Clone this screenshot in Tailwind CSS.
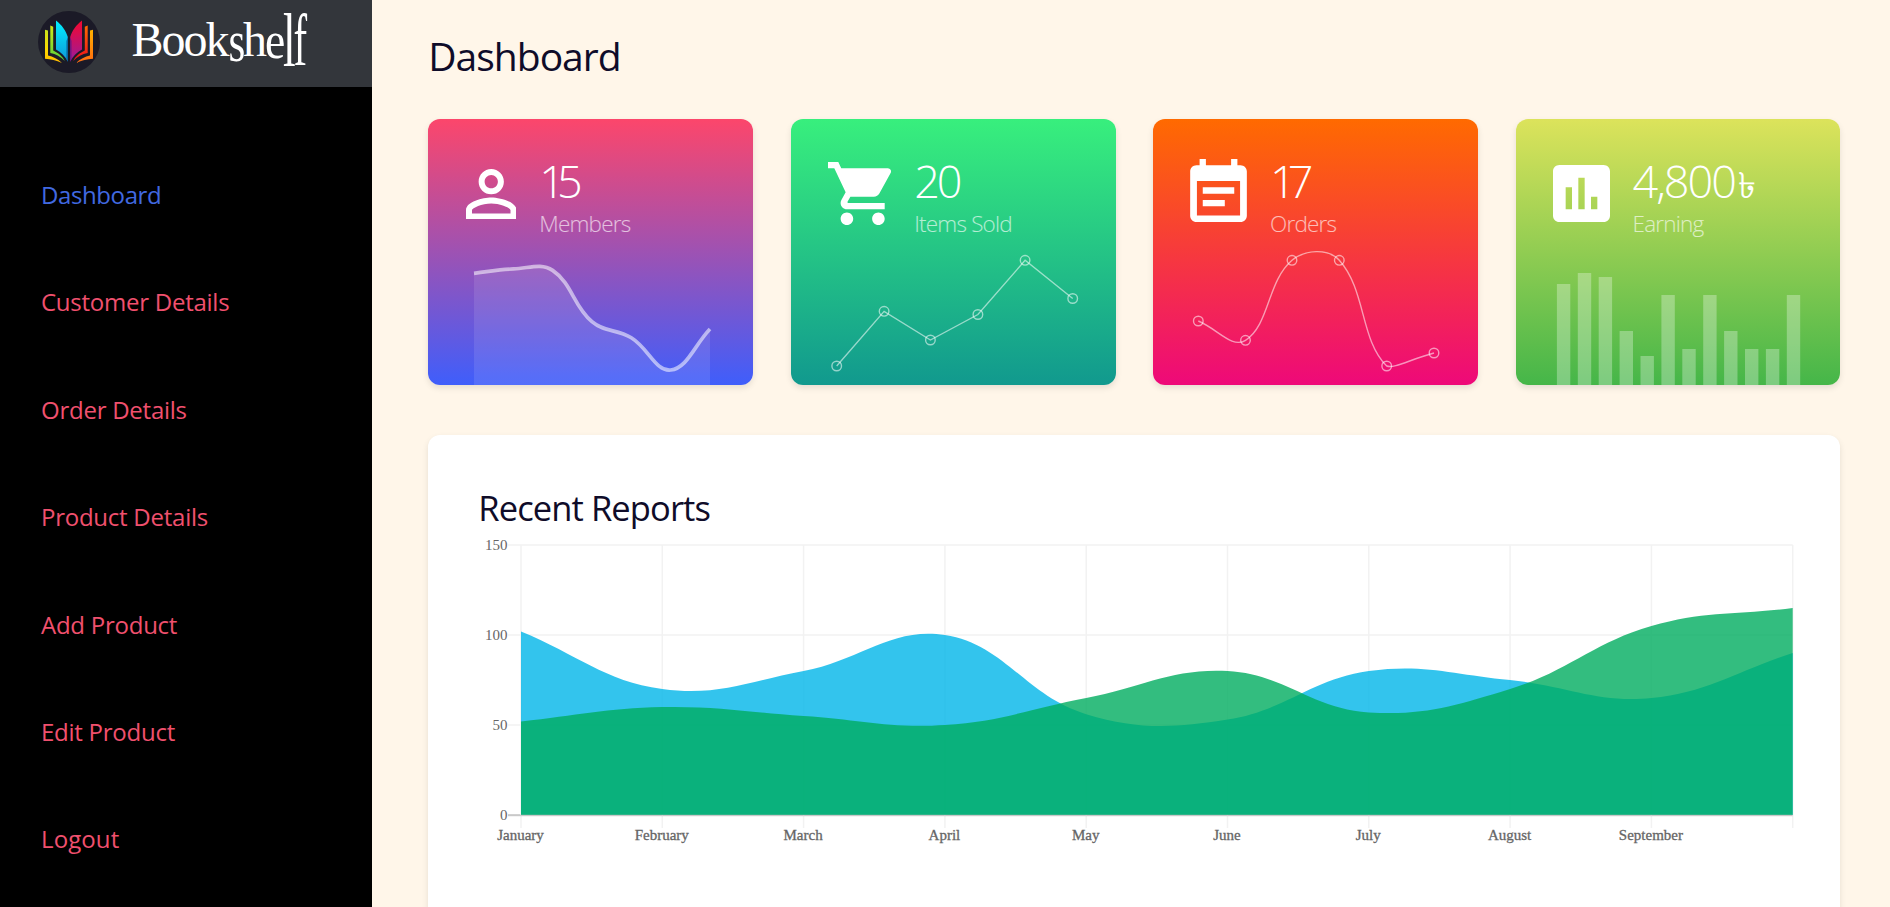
<!DOCTYPE html>
<html lang="en">
<head>
<meta charset="utf-8">
<title>Bookshelf Dashboard</title>
<script src="https://cdn.jsdelivr.net/npm/@tailwindcss/browser@4"></script>
</head>
<body class="flex h-[907px] overflow-hidden bg-[#fff6e9] font-['Open_Sans','Noto_Sans',sans-serif] text-[#0f0c29]">
<aside class="h-full w-[372px] shrink-0 bg-black">
  <div class="h-[87px] bg-[#33363b]">
    <svg class="block h-[87px] w-[372px]" viewBox="0 0 372 87">
      <defs>
        <linearGradient id="cy" x1="0" y1="0" x2="0" y2="1"><stop offset="0" stop-color="#00f0ff"/><stop offset="1" stop-color="#0f96d8"/></linearGradient>
        <linearGradient id="mg" x1="0" y1="0" x2="0" y2="1"><stop offset="0" stop-color="#f5082f"/><stop offset="1" stop-color="#9a1a9c"/></linearGradient>
        <linearGradient id="gn" x1="0" y1="0" x2="0" y2="1"><stop offset="0" stop-color="#d2e81a"/><stop offset="1" stop-color="#55d03a"/></linearGradient>
        <linearGradient id="ye" x1="0" y1="0" x2="0" y2="1"><stop offset="0" stop-color="#c9e21c"/><stop offset=".6" stop-color="#ffd800"/><stop offset="1" stop-color="#ffb800"/></linearGradient>
        <linearGradient id="rd" x1="0" y1="0" x2="0" y2="1"><stop offset="0" stop-color="#ff6a00"/><stop offset="1" stop-color="#ee0f1c"/></linearGradient>
        <linearGradient id="or" x1="0" y1="0" x2="0" y2="1"><stop offset="0" stop-color="#ffb000"/><stop offset="1" stop-color="#ff6a10"/></linearGradient>
      </defs>
      <circle cx="69" cy="42" r="31" fill="#1b1a27"/>
      <path fill="url(#cy)" d="M56 20.5C62 25 66 31 67.8 37V61.5C65 56 61 52.500 56 49.500Z"/>
      <path fill="#075f9c" d="M66.500 41L67.800 37V62L66.500 58.500Z"/>
      <path fill="url(#mg)" d="M82 20.500C76 25 72 31 70.200 37V61.500C73 56 77 52.500 82 49.500Z"/>
      <path fill="#6b1684" d="M71.500 41L70.200 37V62L71.500 58.500Z"/>
      <path fill="url(#gn)" d="M50.300 25.500L53.200 26.800V50.500C58 53 62.500 56 64.800 61C60.500 56.500 56 54 50.300 53Z"/>
      <path fill="url(#rd)" d="M87.700 25.500L84.800 26.800V50.500C80 53 75.500 56 73.200 61C77.500 56.500 82 54 87.700 53Z"/>
      <path fill="url(#ye)" d="M45 29.800L48 30.600V55.500C53 56.500 58 59 62 63C56 60.500 51 59 45 58.700Z"/>
      <path fill="url(#or)" d="M93 29.800L90 30.600V55.500C85 56.500 80 59 76 63C82 60.500 87 59 93 58.700Z"/>
      <g fill="#fff" font-family="Liberation Serif, serif" font-size="48">
        <text x="131.500 161.500 183.500 205.500" y="56">Book</text>
        <text transform="translate(228.500 60.500) scale(.9 1.220)">s</text>
        <text transform="translate(243 56)">h</text>
        <text transform="translate(265 57.500) scale(.95 1.100)">e</text>
        <text transform="translate(283 65.500) scale(.95 1.580)">l</text>
        <text transform="translate(293.500 65) scale(.85 1.540)">f</text>
      </g>
    </svg>
  </div>
  <nav class="mt-[54px] flex flex-col pl-[41px] text-[24px] leading-[107.400px] tracking-[-0.250px] text-[#f0506e]">
    <a class="tracking-[-0.400px] text-[#4169e1]">Dashboard</a>
    <a>Customer Details</a>
    <a>Order Details</a>
    <a>Product Details</a>
    <a>Add Product</a>
    <a>Edit Product</a>
    <a class="tracking-[0.100px]">Logout</a>
  </nav>
</aside>
<main class="flex w-[1518px] flex-col pr-[49.700px] pl-[56.300px]">
  <h1 class="mt-[30px] h-[89px] shrink-0 text-[39px] leading-[52px] tracking-[-1px]">Dashboard</h1>
  <section class="grid h-[266px] shrink-0 grid-cols-4 gap-[37.600px]">
    <article class="flex flex-col justify-between overflow-hidden rounded-xl bg-linear-to-b/srgb from-[#fc466b] to-[#3f5efb] shadow-[0_3px_6px_rgba(0,0,0,0.1)]">
      <div class="flex pt-[37px] pl-[37.500px]">
        <svg class="mt-[12.500px] h-[50.500px] w-[50.500px]" viewBox="4 4 16 16" fill="#fff"><path d="M12 5.900c1.160 0 2.100.94 2.100 2.100s-.94 2.100-2.100 2.100S9.900 9.160 9.900 8s.94-2.100 2.100-2.100m0 9c2.970 0 6.100 1.460 6.100 2.100v1.100H5.900V17c0-.64 3.130-2.100 6.100-2.100M12 4C9.790 4 8 5.790 8 8s1.790 4 4 4 4-1.790 4-4-1.790-4-4-4zm0 9c-2.670 0-8 1.340-8 4v3h16v-3c0-2.660-5.330-4-8-4z"/></svg>
        <div class="pl-[23px] font-light text-white">
          <div class="h-[50px] text-[45px] leading-[50px] tracking-[-8px]">15</div>
          <div class="text-[22.500px] leading-[36px] tracking-[-0.800px] text-white/65">Members</div>
        </div>
      </div>
      <svg class="block h-[140px] w-[325px]" viewBox="0 0 325 140"><path id="m-fill" fill="#fff" fill-opacity=".1"/><path id="m-line" fill="none" stroke="#fff" stroke-opacity=".55" stroke-width="3.700"/></svg>
    </article>
    <article class="flex flex-col justify-between overflow-hidden rounded-xl bg-linear-to-b/srgb from-[#38ef7d] to-[#11998e] shadow-[0_3px_6px_rgba(0,0,0,0.1)]">
      <div class="flex pt-[37px] pl-[37.500px]">
        <svg class="mt-[6px] h-[63px] w-[63px]" viewBox="1 2 20 20" fill="#fff"><path d="M7 18c-1.100 0-1.990.9-1.990 2S5.900 22 7 22s2-.9 2-2-.9-2-2-2zM1 2v2h2l3.600 7.590-1.350 2.450c-.16.28-.25.61-.25.96 0 1.100.9 2 2 2h12v-2H7.420c-.14 0-.25-.11-.25-.25l.03-.12.900-1.630h7.450c.75 0 1.410-.41 1.750-1.030l3.580-6.490A1 1 0 0 0 20.010 4H5.210l-.94-2H1zm16 16c-1.100 0-1.990.9-1.990 2s.89 2 1.990 2 2-.9 2-2-.9-2-2-2z"/></svg>
        <div class="pl-[23px] font-light text-white">
          <div class="h-[50px] text-[45px] leading-[50px] tracking-[-3px]">20</div>
          <div class="text-[22.500px] leading-[36px] tracking-[-0.800px] text-white/65">Items Sold</div>
        </div>
      </div>
      <svg id="items" class="block h-[140px] w-[325px]" viewBox="0 0 325 140" fill="none" stroke="#fff" stroke-opacity=".55" stroke-width="1.400"></svg>
    </article>
    <article class="flex flex-col justify-between overflow-hidden rounded-xl bg-linear-to-b/srgb from-[#ff6a00] to-[#ee0979] shadow-[0_3px_6px_rgba(0,0,0,0.1)]">
      <div class="flex pt-[37px] pl-[37px]">
        <svg class="mt-[3px] h-[63px] w-[57px]" viewBox="3 1 18 20" fill="#fff"><path d="M17 10H7v2h10v-2zm2-7h-1V1h-2v2H8V1H6v2H5c-1.110 0-1.990.9-1.990 2L3 19c0 1.100.89 2 2 2h14c1.100 0 2-.9 2-2V5c0-1.100-.9-2-2-2zm-.15 15.950H5.150V8h13.700v10.950zM14 14H7v2h7v-2z"/></svg>
        <div class="pl-[23px] font-light text-white">
          <div class="h-[50px] text-[45px] leading-[50px] tracking-[-8px]">17</div>
          <div class="text-[22.500px] leading-[36px] tracking-[-0.800px] text-white/65">Orders</div>
        </div>
      </div>
      <svg id="orders" class="block h-[140px] w-[325px]" viewBox="0 0 325 140" fill="none" stroke="#fff" stroke-opacity=".55" stroke-width="1.400"></svg>
    </article>
    <article class="flex flex-col justify-between overflow-hidden rounded-xl bg-linear-to-b/srgb from-[#dce35b] to-[#45b649] shadow-[0_3px_6px_rgba(0,0,0,0.1)]">
      <div class="flex pt-[37px] pl-[37px]">
        <svg class="mt-[9px] h-[57px] w-[57px]" viewBox="3 3 18 18" fill="#fff"><path d="M19 3H5c-1.100 0-2 .9-2 2v14c0 1.100.9 2 2 2h14c1.100 0 2-.9 2-2V5c0-1.100-.9-2-2-2zM9 17H7v-7h2v7zm4 0h-2V7h2v10zm4 0h-2v-4h2v4z"/></svg>
        <div class="pl-[23px] font-light text-white">
          <div class="h-[50px] text-[45px] leading-[50px] tracking-[-2px]">4,800<span class="ml-[3px] text-[36px]">৳</span></div>
          <div class="text-[22.500px] leading-[36px] tracking-[-0.800px] text-white/65">Earning</div>
        </div>
      </div>
      <svg id="earning" class="block h-[140px] w-[325px]" viewBox="0 0 325 140" fill="#fff" fill-opacity=".3"></svg>
    </article>
  </section>
  <section class="mt-[50px] h-[500px] shrink-0 rounded-xl bg-white pt-[47px] shadow-[0_3px_6px_rgba(0,0,0,0.1)]">
    <h2 class="h-[53px] pl-[50px] text-[34.500px] leading-[51px] tracking-[-0.900px]">Recent Reports</h2>
    <svg id="report" class="block h-[320px] w-[1412px]" viewBox="0 0 1412 320" font-family="Liberation Serif, serif" font-size="15"></svg>
  </section>
</main>
<script>
// Smooth bezier path through the points; control points are weighted by segment length.
function spline(p, t) {
  const cps = p.map((c, i) => {
    const a = p[i - 1] || c, b = p[i + 1] || c;
    const d0 = Math.hypot(c[0] - a[0], c[1] - a[1]), d1 = Math.hypot(b[0] - c[0], b[1] - c[1]);
    const s = d0 + d1, fa = t * d0 / s, fb = t * d1 / s, dx = b[0] - a[0], dy = b[1] - a[1];
    return [[c[0] - fa * dx, c[1] - fa * dy], [c[0] + fb * dx, c[1] + fb * dy]];
  });
  let d = 'M' + p[0];
  for (let i = 1; i < p.length; i++) d += 'C' + cps[i - 1][1] + ' ' + cps[i][0] + ' ' + p[i];
  return d;
}
const $ = id => document.getElementById(id);

const members = [78, 81, 80, 45, 34, 12, 40].map((v, i) => [46 + i * 39.33, 142.6 - v * 1.465]);
const md = spline(members, 0.4);
$('m-line').setAttribute('d', md);
$('m-fill').setAttribute('d', md + 'V140H46Z');

const dots = p => p.map(c => `<circle cx="${c[0]}" cy="${c[1]}" r="4.8"/>`).join('');
const items = [[45.7, 121], [93.1, 66.3], [139.4, 95], [186.9, 69.5], [234.1, 15.3], [281.7, 53.5]];
$('items').innerHTML = `<path d="M${items.join('L')}"/>` + dots(items);
const orders = [[45.3, 76], [92.5, 95.3], [139, 15.3], [186.3, 15.3], [233.7, 121], [281, 108]];
const od = spline(orders, 0.4);
$('orders').innerHTML = `<path d="${od.replace(/C[^C]*$/, 'C241 124 258 114 281 108')}"/>` + dots(orders);

$('earning').innerHTML = [101, 112, 108, 54, 29, 90, 36, 90, 54, 36, 36, 90]
  .map((h, i) => `<rect x="${40.9 + i * 20.9}" y="${140 - h}" width="13.4" height="${h}"/>`).join('');

const X = i => 93 + i * 141.3, Y = v => 280 - v * 1.8;
const area = (data, color) => `<path fill="${color}" d="${spline(data.map((v, i) => [X(i), Y(v)]), 0.4)}V280H93Z"/>`;
let out = '';
[0, 50, 100, 150].forEach(v => {
  out += `<path d="M80 ${Y(v)}H${X(9)}" stroke="${v ? '#f2f2f2' : '#c6c6c6'}" stroke-width="1.5"/>`;
  out += `<text x="79.5" y="${Y(v) + 4.5}" text-anchor="end" fill="#666">${v}</text>`;
});
for (let i = 0; i < 10; i++) out += `<path d="M${X(i)} 10V293" stroke="#f2f2f2" stroke-width="1.5"/>`;
out += area([102, 70, 80, 100, 56, 53, 80, 75, 65, 90], 'rgba(0,181,233,.8)');
out += area([52, 60, 55, 50, 65, 80, 57, 70, 105, 115], 'rgba(0,173,95,.8)');
out += `<path d="M80 280.5H${X(9)}" stroke="#c6c6c6" stroke-opacity=".8" stroke-width="1.5"/>`;
['January', 'February', 'March', 'April', 'May', 'June', 'July', 'August', 'September'].forEach((m, i) => {
  out += `<text x="${X(i) - .5}" y="304.500" text-anchor="middle" fill="#666" stroke="#666" stroke-width=".3">${m}</text>`;
});
$('report').innerHTML = out;
</script>
</body>
</html>
